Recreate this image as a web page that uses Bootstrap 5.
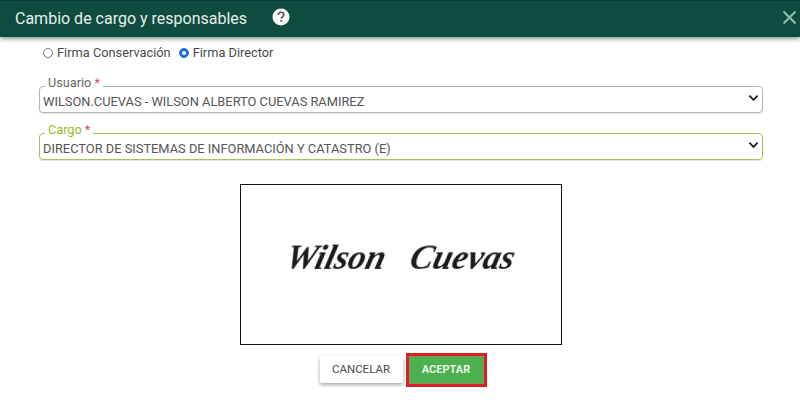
<!DOCTYPE html>
<html lang="es">
<head>
  <meta charset="UTF-8">
  <meta name="viewport" content="width=device-width, initial-scale=1.0">
  <title>Cambio de cargo y responsables</title>
  <link rel="stylesheet" href="https://cdn.jsdelivr.net/npm/bootstrap@5.3.0/dist/css/bootstrap.min.css">
  <style>
    body { font-family: Roboto, "Liberation Sans", sans-serif; background: #fff; overflow: hidden; }
    .dlg-head { height: 37px; padding: 0 3px 0 15px; background: #0f4c3f; border-top: 1px solid #0b3a33; box-shadow: 0 2px 4px rgba(20, 60, 50, .5); color: #e4f0ec; }
    .dlg-title { font-size: 16px; line-height: 1; margin: 0 25px 1px 0; font-weight: 400; }
    .dlg-help { width: 18px; height: 18px; margin-bottom: 4px; }
    .dlg-close { width: 15px; height: 15px; margin-left: auto; margin-bottom: 4px; padding: 0; background: none; border: 0; line-height: 0; }
    .dlg-body { padding: 8px 37px 0 39px; }
    .firma-row { height: 17px; padding-left: 4px; margin-bottom: 18px; gap: 8px; font-size: 12.8px; color: #4a4a4a; }
    .firma-row .form-check { min-height: 0; padding: 0; margin: 0; gap: 4px; }
    .firma-row .form-check-input { width: 10px; height: 10px; margin: 0; float: none; border-color: #767676; }
    .firma-row .form-check-input:checked { background-color: #1a73d9; border-color: #1a73d9; }
    .firma-row .form-check-label { line-height: 1; }
    .campo { border: 1px solid #b5b5b5; border-radius: 4px; padding: 0 0 0 3px; margin: 0 0 14px; height: 33px; box-shadow: 0 1px 1px rgba(0, 0, 0, .12); }
    .campo legend { float: none; width: auto; font-size: 12.7px; line-height: 6px; margin: 0 0 0 2px; padding: 0 3px 7px; color: #666; }
    .campo legend span { color: #d9534f; }
    .campo .form-select { border: 0; border-radius: 0; height: 18px; margin-top: 0; padding: 0 30px 0 0; font-size: 12.85px; line-height: 18px; color: #555; box-shadow: none; background-color: transparent;
      background-image: url("data:image/svg+xml,%3csvg xmlns='http://www.w3.org/2000/svg' viewBox='0 0 12 8'%3e%3cpath fill='none' stroke='%23222' stroke-width='2' d='M1.500 1.500L6 6l4.500-4.500'/%3e%3c/svg%3e");
      background-position: right 3px top 1px; background-size: 11px 8px; }
    .campo-ok { border-color: #a3c55a; }
    .campo-ok legend { color: #8ebf1f; }
    .firma-wrap { margin-top: 24px; }
    .firma-box { width: 322px; height: 161px; padding-bottom: 14px; border: 1px solid #111; background: #fff; }
    .firma-text { font-family: "Liberation Serif", serif; font-style: italic; font-weight: 700; font-size: 34px; color: #1a1a1a; word-spacing: 16px; white-space: nowrap; transform: skewX(-14deg) scaleX(1.02); filter: blur(.4px); }
    .dlg-actions { margin-top: 8px; gap: 3px; padding-left: 4px; }
    .btn-cancelar { width: 83px; height: 27px; margin-top: 3px; padding: 0; font-size: 11.5px; color: #4a4a4a; background: #fff; border: 0; border-radius: 2px; box-shadow: 0 2px 4px rgba(0, 0, 0, .35); }
    .btn-aceptar { width: 81px; height: 34px; padding: 0; font-size: 11px; font-weight: 700; color: #e9f5e6; background: #4caf50; border: 3px solid #d9202a; border-radius: 0; box-shadow: inset 0 0 0 1px #7a9a50; }
  </style>
</head>
<body>
  <div class="dlg-head d-flex align-items-center">
    <h1 class="dlg-title">Cambio de cargo y responsables</h1>
    <svg class="dlg-help" viewBox="0 0 18 18" aria-hidden="true">
      <circle cx="9" cy="9" r="8.500" fill="#fff"/>
      <path d="M6.300 7c0-1.700 1.200-2.700 2.800-2.700s2.700 1 2.700 2.500c0 2-2.500 2.200-2.500 4" fill="none" stroke="#555" stroke-width="1.600"/>
      <rect x="8.400" y="12" width="1.800" height="1.800" fill="#555"/>
    </svg>
    <button type="button" class="dlg-close" aria-label="Cerrar">
      <svg width="15" height="15" viewBox="0 0 15 15" aria-hidden="true">
        <path d="M1.500 1.500l12 12M13.500 1.500l-12 12" stroke="#8fbdb2" stroke-width="2" fill="none"/>
      </svg>
    </button>
  </div>

  <div class="dlg-body">
    <div class="firma-row d-flex align-items-center">
      <div class="form-check d-flex align-items-center">
        <input class="form-check-input" type="radio" name="firma" id="firmaCons">
        <label class="form-check-label" for="firmaCons">Firma Conservación</label>
      </div>
      <div class="form-check d-flex align-items-center">
        <input class="form-check-input" type="radio" name="firma" id="firmaDir" checked>
        <label class="form-check-label" for="firmaDir">Firma Director</label>
      </div>
    </div>

    <fieldset class="campo">
      <legend>Usuario <span>*</span></legend>
      <select class="form-select">
        <option>WILSON.CUEVAS - WILSON ALBERTO CUEVAS RAMIREZ</option>
      </select>
    </fieldset>

    <fieldset class="campo campo-ok">
      <legend>Cargo <span>*</span></legend>
      <select class="form-select">
        <option>DIRECTOR DE SISTEMAS DE INFORMACIÓN Y CATASTRO (E)</option>
      </select>
    </fieldset>

    <div class="firma-wrap d-flex justify-content-center">
      <div class="firma-box d-flex align-items-center justify-content-center">
        <span class="firma-text">Wilson Cuevas</span>
      </div>
    </div>

    <div class="dlg-actions d-flex justify-content-center align-items-start">
      <button type="button" class="btn btn-cancelar">CANCELAR</button>
      <button type="button" class="btn btn-aceptar">ACEPTAR</button>
    </div>
  </div>
</body>
</html>
